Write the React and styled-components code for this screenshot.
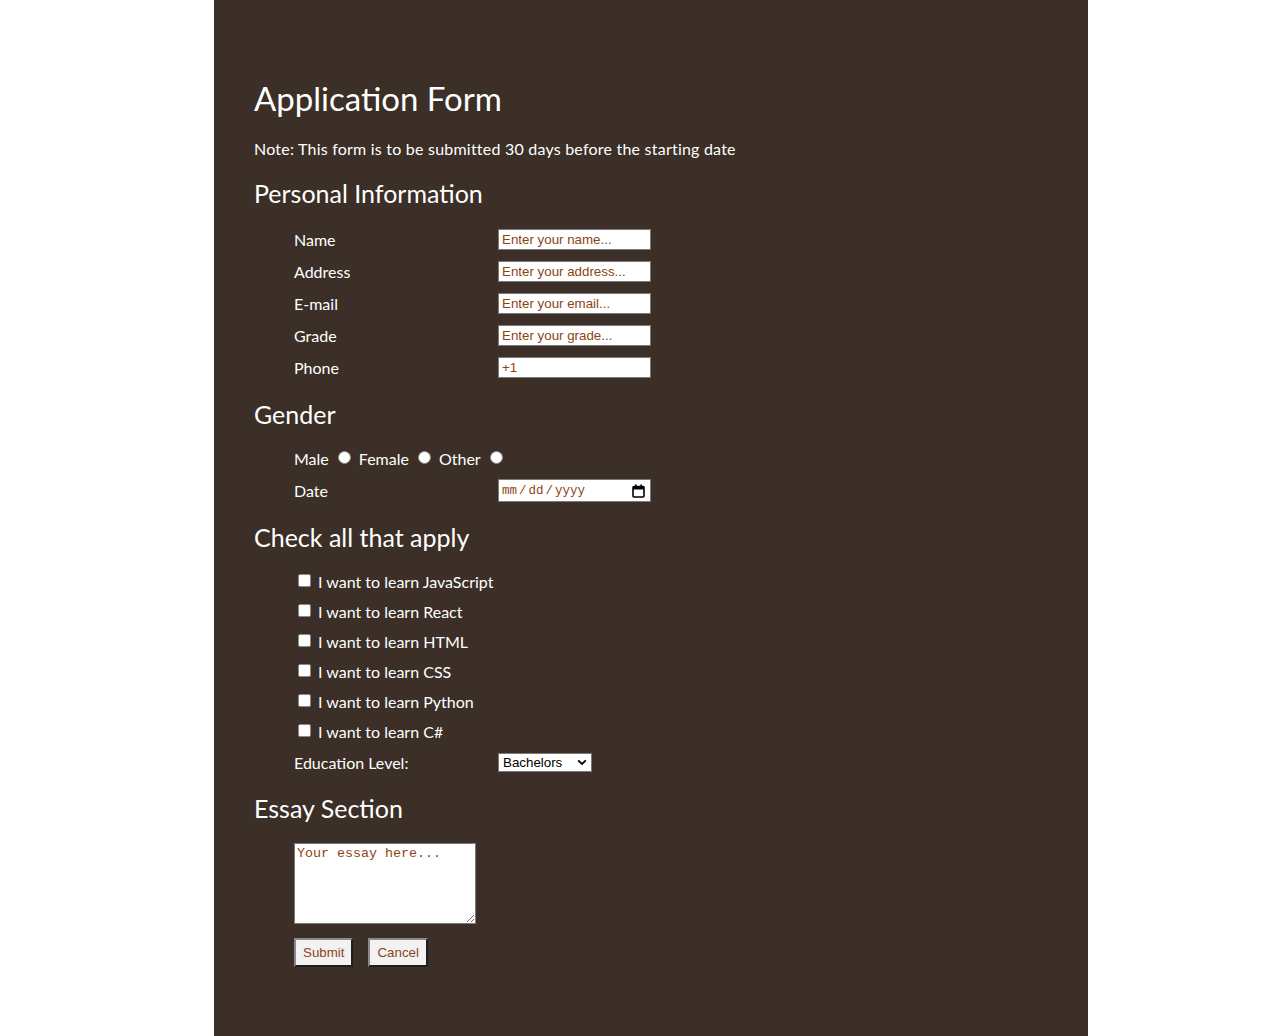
import React from "react";
import styled, { createGlobalStyle } from "styled-components";

const Global = createGlobalStyle`
  html, body { margin: 0; padding: 0; background: #ffffff; }
  body { font-family: Lato, "Open Sans", sans-serif; }
`;

const Page = styled.div`
  width: 874px;
  min-height: 1036px;
  margin-left: 214px;
  background: #3b2f27;
  color: #ffffff;
  padding: 76px 40px 40px;
  box-sizing: border-box;
`;

const Title = styled.h1`
  font-size: 33px;
  font-weight: 400;
  line-height: 44px;
  margin: 0 0 18px;
`;

const Note = styled.p`
  font-size: 16px;
  line-height: 22px;
  letter-spacing: 0.22px;
  margin: 0 0 17px;
`;

const Heading = styled.h2`
  font-size: 25px;
  font-weight: 400;
  line-height: 32px;
  margin: ${(p) => p.$mt || 0}px 0 ${(p) => p.$mb || 14}px;
`;

const Fields = styled.div`
  display: grid;
  grid-template-columns: 204px 153px;
  grid-auto-rows: 32px;
  align-items: center;
  margin-left: 40px;
`;

const Label = styled.label`
  font-size: 16px;
`;

const TextInput = styled.input`
  width: 153px;
  height: 21px;
  box-sizing: border-box;
  border: 1px solid #7a7a7a;
  padding: 1px 3px;
  font-family: "Liberation Sans", Arial, sans-serif;
  font-size: 13.33px;
  color: #8b4513;
  background: #ffffff;
  outline: none;
  &::placeholder { color: #8b4513; opacity: 1; }
`;

const DateBox = styled.div`
  width: 153px;
  height: 23px;
  box-sizing: border-box;
  border: 1px solid #7a7a7a;
  background: #ffffff;
  display: flex;
  align-items: center;
  justify-content: space-between;
  padding: 1px 5px 0 3px;
  font-family: "Liberation Mono", "Courier New", monospace;
  font-size: 12.5px;
  color: #8b4513;
`;

const Sep = styled.span`
  margin: 0 2px;
`;

const RadioRow = styled.div`
  grid-column: 1 / span 2;
  display: flex;
  align-items: center;
  font-size: 16px;
`;

const Radio = styled.span`
  display: inline-block;
  width: 13px;
  height: 13px;
  border-radius: 50%;
  background: #ffffff;
  border: 1px solid #8a8a8a;
  box-sizing: border-box;
  margin: -2px 8px 0 9px;
`;

const Checks = styled.div`
  margin-left: 44px;
  display: flex;
  flex-direction: column;
`;

const CheckRow = styled.div`
  height: 30px;
  display: flex;
  align-items: center;
  gap: 7px;
  font-size: 16px;
`;

const Box = styled.span`
  display: inline-block;
  width: 13px;
  height: 13px;
  background: #ffffff;
  border: 1px solid #8a8a8a;
  box-sizing: border-box;
  border-radius: 2px;
  margin-top: -2px;
`;

const Select = styled.div`
  width: 94px;
  height: 19px;
  box-sizing: border-box;
  border: 1px solid #7a7a7a;
  background: #ffffff;
  color: #000000;
  font-family: "Liberation Sans", Arial, sans-serif;
  font-size: 13.33px;
  display: flex;
  align-items: center;
  justify-content: space-between;
  padding: 0 4px 0 4px;
`;

const EssayBlock = styled.div`
  margin-left: 40px;
  display: flex;
  flex-direction: column;
  gap: 14px;
`;

const TextArea = styled.textarea`
  width: 182px;
  height: 81px;
  box-sizing: border-box;
  border: 1px solid #7a7a7a;
  padding: 2px;
  font-family: "Liberation Mono", "Courier New", monospace;
  font-size: 13.33px;
  color: #8b4513;
  resize: both;
  outline: none;
  &::placeholder { color: #8b4513; opacity: 1; }
`;

const Buttons = styled.div`
  display: flex;
  gap: 15px;
`;

const Button = styled.button`
  height: 29px;
  padding: 0 7px;
  background: #f2f2f2;
  border: 2px solid;
  border-top-color: #8a8a8a;
  border-left-color: #8a8a8a;
  border-right-color: #1e1e1e;
  border-bottom-color: #1e1e1e;
  font-family: "Liberation Sans", Arial, sans-serif;
  font-size: 13.33px;
  color: #8b4513;
`;

const Cal = () => (
  <svg width="13" height="14" viewBox="0 0 13 14">
    <rect x="1" y="2.5" width="11" height="10.5" rx="1" fill="none" stroke="#000" strokeWidth="1.6" />
    <rect x="1" y="2.5" width="11" height="3" fill="#000" />
    <rect x="3" y="0.5" width="1.6" height="3" fill="#000" />
    <rect x="8.4" y="0.5" width="1.6" height="3" fill="#000" />
  </svg>
);

const Chevron = () => (
  <svg width="10" height="7" viewBox="0 0 10 7">
    <path d="M1.2 1.3 L5 5 L8.8 1.3" fill="none" stroke="#000" strokeWidth="1.8" />
  </svg>
);

const personal = [
  ["Name", "Enter your name...", ""],
  ["Address", "Enter your address...", ""],
  ["E-mail", "Enter your email...", ""],
  ["Grade", "Enter your grade...", ""],
  ["Phone", "", "+1"],
];

const langs = ["JavaScript", "React", "HTML", "CSS", "Python", "C#"];

export default function App() {
  return (
    <>
      <Global />
      <Page>
        <Title>Application Form</Title>
        <Note>Note: This form is to be submitted 30 days before the starting date</Note>
        <Heading $mb={14}>Personal Information</Heading>
        <Fields>
          {personal.map(([l, ph, v]) => (
            <React.Fragment key={l}>
              <Label>{l}</Label>
              <TextInput placeholder={ph} defaultValue={v} />
            </React.Fragment>
          ))}
        </Fields>
        <Heading $mt={15} $mb={12}>Gender</Heading>
        <Fields>
          <RadioRow>
            Male<Radio />Female<Radio />Other<Radio />
          </RadioRow>
          <Label>Date</Label>
          <DateBox>
            <span>mm<Sep>/</Sep>dd<Sep>/</Sep>yyyy</span>
            <Cal />
          </DateBox>
        </Fields>
        <Heading $mt={15} $mb={13}>Check all that apply</Heading>
        <Checks>
          {langs.map((l) => (
            <CheckRow key={l}>
              <Box />I want to learn {l}
            </CheckRow>
          ))}
        </Checks>
        <Fields>
          <Label>Education Level:</Label>
          <Select>
            <span>Bachelors</span>
            <Chevron />
          </Select>
        </Fields>
        <Heading $mt={14} $mb={19}>Essay Section</Heading>
        <EssayBlock>
          <TextArea placeholder="Your essay here..." />
          <Buttons>
            <Button>Submit</Button>
            <Button>Cancel</Button>
          </Buttons>
        </EssayBlock>
      </Page>
    </>
  );
}
